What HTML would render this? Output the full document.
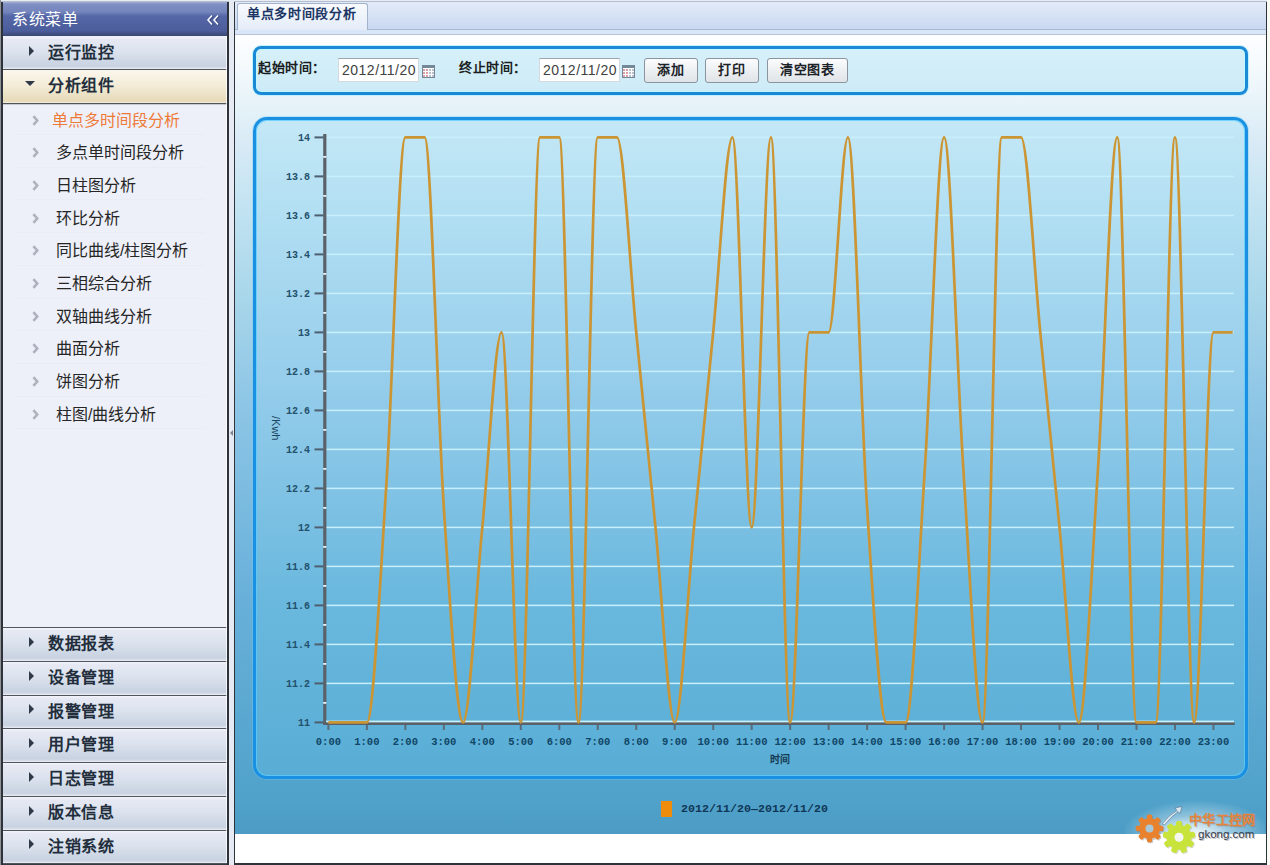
<!DOCTYPE html>
<html lang="zh-CN"><head><meta charset="utf-8"><title>单点多时间段分析</title>
<style>
html,body{margin:0;padding:0}
body{width:1270px;height:865px;overflow:hidden;position:relative;background:#e8ecf3;font-family:"Liberation Sans",sans-serif}
div,span{box-sizing:border-box}
.a{position:absolute}
#lb{position:absolute;left:0;top:0;width:1px;height:865px;background:#8f9297}
#sb{position:absolute;left:1px;top:2px;width:228px;height:863px;background:#2e323a}
#topl{position:absolute;left:0;top:1px;width:1270px;height:1px;background:#b4bdd0}
#sbin{position:absolute;left:3px;top:2px;width:224px;height:861px;background:#edf0f8}
#hdr{position:absolute;left:3px;top:2px;width:224px;height:34px;background:linear-gradient(#a4b0d2 0,#8090c4 2px,#7485bd 10px,#5567a6 14px,#4b5d9b 29px,#44538a 31px,#3c4874 34px)}
#hdr span{position:absolute;left:9px;top:8px;font-size:16px;color:#fff;line-height:20px;letter-spacing:0.7px}
.acc{position:absolute;left:3px;width:224px;background:linear-gradient(#f4f5fb 0,#e6e9f4 8%,#dce3ee 45%,#c8d2e1 90%,#d6dce8 96%,#eef0f6 100%)}
.acc span{position:absolute;left:45px;top:6px;font-size:16px;font-weight:bold;color:#222e3c;line-height:20px;letter-spacing:0.5px}
.acc .tri{position:absolute;left:26px;width:0;height:0;border-left:5px solid #2f3948;border-top:5px solid transparent;border-bottom:5px solid transparent}
.acc.open{background:linear-gradient(#fbf7ec 0,#f3ebd6 50%,#e6dab8 94%,#f2ecdc 100%)}
.acc.open .tri{left:22px;border-top:5px solid #2f3948;border-left:5px solid transparent;border-right:5px solid transparent;border-bottom:0}
.bd{position:absolute;left:3px;width:224px;height:1px;background:#50555e;box-shadow:0 0.5px 0 rgba(80,85,94,0.5)}
.chev{position:absolute;left:32px;width:6px;height:10px}
.chev:before{content:"";position:absolute;left:0;top:0;border-left:5px solid #a9adb8;border-top:5px solid transparent;border-bottom:5px solid transparent}
.chev:after{content:"";position:absolute;left:-1.5px;top:2px;border-left:3px solid #edf0f8;border-top:3px solid transparent;border-bottom:3px solid transparent}
.si{position:absolute;font-size:16px;line-height:20px;color:#262626;white-space:nowrap}
.si.sel{color:#ef7a38}
.sep{position:absolute;left:14px;width:190px;height:1px;background:#e9ecf5}
#gap{position:absolute;left:229px;top:0;width:5px;height:865px;background:#e6eaf3}
#cb{position:absolute;left:234px;top:2px;width:1033px;height:863px;background:#2e323a}
#tabbar{position:absolute;left:235px;top:2px;width:1031px;height:28px;background:linear-gradient(#e3ebf9,#c9d8f0);border-bottom:1px solid #a9b8d0}
#tabstrip{position:absolute;left:235px;top:30px;width:1031px;height:5px;background:#d9e6f7;border-bottom:1px solid #b7c3d6}
#tab{position:absolute;left:237px;top:3px;width:131px;height:27px;border:1px solid #a3b3cc;border-bottom:0;border-radius:3px 3px 0 0;background:linear-gradient(#f8fafe,#e4ecf8)}
#tab span{position:absolute;left:9px;top:2px;font-size:13px;font-weight:bold;color:#1b3564;letter-spacing:0.7px;line-height:16px}
#panel{position:absolute;left:235px;top:35px;width:1031px;height:799px;background:linear-gradient(#fdfeff 0,#f3f9fc 35px,#e6f3f9 70px,#d8eaf6 110px,#c4e4f2 165px,#a8d6ea 265px,#8ec6e6 365px,#68b0da 565px,#50a2ca 765px,#4c9cc6 798px)}
#white{position:absolute;left:235px;top:834px;width:1031px;height:29px;background:#fff}
#tb{position:absolute;left:253px;top:46px;width:995px;height:49px;border:3px solid #1a8ad6;border-radius:8px;box-shadow:0 0 0 1px rgba(180,240,255,0.8),inset 0 0 0 1px rgba(190,250,255,0.9);background:linear-gradient(#d6f0f9,#cdebf7)}
.lbl{position:absolute;top:61px;font-family:"Liberation Serif",serif;font-size:13px;font-weight:bold;color:#1a1e22;line-height:14px;letter-spacing:0.6px}
.inp{position:absolute;top:58px;width:81px;height:24px;background:#fff;border:1px solid #d3d9de;border-top:1px solid #9ea5ab}
.inp span{position:absolute;left:3px;top:3px;font-size:14px;color:#404040;line-height:16px;letter-spacing:0.5px}
.cal{position:absolute;top:64px;width:13px;height:12px;background:#7d8fa0;border-radius:1px}
.cal i{position:absolute;left:1px;top:3px;width:11px;height:8px;background:repeating-linear-gradient(90deg,#e2b0b0 0 2px,#fff 2px 3px)}
.btn{position:absolute;top:58px;height:25px;border:1px solid #8c959e;border-radius:3px;background:linear-gradient(#fbfcfd,#dfe4e8);font-family:"Liberation Serif",serif;font-size:13px;font-weight:bold;color:#1c2328;text-align:center;line-height:22px;letter-spacing:0.8px}
#cbox{position:absolute;left:253px;top:117px;width:995px;height:662px;border:3px solid #1a90e2;border-radius:14px;box-shadow:0 0 0 1px rgba(110,200,245,0.35),inset 0 0 0 1px rgba(90,205,255,0.75);background:linear-gradient(#c4e8f6 0,#b4e0f3 80px,#92cbea 280px,#6ab8de 480px,#5aaed6 643px)}
svg text{font-family:"Liberation Sans",sans-serif}
.yl{font-family:"Liberation Mono",monospace;font-size:10px;font-weight:bold;fill:#23506a}
.xl{font-family:"Liberation Mono",monospace;font-size:10.5px;font-weight:bold;fill:#104666}
.xt{font-size:10px;font-weight:bold;fill:#163a52}
.yt{font-size:11px;fill:#1a4560}
#leg{position:absolute;left:661px;top:801px;width:11px;height:16px;background:#f08c0c}
#legt{position:absolute;left:681px;top:802px;font-family:"Liberation Mono",monospace;font-size:11.67px;font-weight:bold;color:#0f3656;line-height:14px}
</style></head><body>
<div id="topl"></div><div class="a" style="left:1267px;top:0;width:3px;height:865px;background:#fbfbf6"></div><div id="lb"></div>
<div id="sb"></div>
<div id="sbin"></div>
<div id="hdr"><span>系统菜单</span>
<svg class="a" style="left:201px;top:12px" width="18" height="12" viewBox="0 0 18 12"><path d="M8 1.5 L4 6 L8 10.5 M14 1.5 L10 6 L14 10.5" stroke="#2c3868" stroke-width="1.6" fill="none" transform="translate(1.2,0.6)" opacity="0.6"/><path d="M8 1.5 L4 6 L8 10.5 M14 1.5 L10 6 L14 10.5" stroke="#fff" stroke-width="1.5" fill="none"/></svg>
</div>
<div class="acc" style="top:37px;height:32px"><div class="tri" style="top:8.5px"></div><span>运行监控</span></div><div class="bd" style="top:69px"></div>
<div class="acc open" style="top:70px;height:33px"><div class="tri" style="top:11px"></div><span>分析组件</span></div><div class="bd" style="top:103px"></div>
<svg class="a" style="left:32px;top:114.5px" width="7" height="11" viewBox="0 0 7 11"><path d="M1.4 1.2 L5.2 5.5 L1.4 9.8" stroke="#aeb2be" stroke-width="2.6" fill="none"/></svg><div class="si sel" style="top:110.5px;left:52px">单点多时间段分析</div><div class="sep" style="top:134.0px"></div>
<svg class="a" style="left:32px;top:147.2px" width="7" height="11" viewBox="0 0 7 11"><path d="M1.4 1.2 L5.2 5.5 L1.4 9.8" stroke="#aeb2be" stroke-width="2.6" fill="none"/></svg><div class="si" style="top:143.2px;left:56px">多点单时间段分析</div><div class="sep" style="top:166.7px"></div>
<svg class="a" style="left:32px;top:179.9px" width="7" height="11" viewBox="0 0 7 11"><path d="M1.4 1.2 L5.2 5.5 L1.4 9.8" stroke="#aeb2be" stroke-width="2.6" fill="none"/></svg><div class="si" style="top:175.9px;left:56px">日柱图分析</div><div class="sep" style="top:199.4px"></div>
<svg class="a" style="left:32px;top:212.6px" width="7" height="11" viewBox="0 0 7 11"><path d="M1.4 1.2 L5.2 5.5 L1.4 9.8" stroke="#aeb2be" stroke-width="2.6" fill="none"/></svg><div class="si" style="top:208.6px;left:56px">环比分析</div><div class="sep" style="top:232.1px"></div>
<svg class="a" style="left:32px;top:245.3px" width="7" height="11" viewBox="0 0 7 11"><path d="M1.4 1.2 L5.2 5.5 L1.4 9.8" stroke="#aeb2be" stroke-width="2.6" fill="none"/></svg><div class="si" style="top:241.3px;left:56px">同比曲线/柱图分析</div><div class="sep" style="top:264.8px"></div>
<svg class="a" style="left:32px;top:278.0px" width="7" height="11" viewBox="0 0 7 11"><path d="M1.4 1.2 L5.2 5.5 L1.4 9.8" stroke="#aeb2be" stroke-width="2.6" fill="none"/></svg><div class="si" style="top:274.0px;left:56px">三相综合分析</div><div class="sep" style="top:297.5px"></div>
<svg class="a" style="left:32px;top:310.7px" width="7" height="11" viewBox="0 0 7 11"><path d="M1.4 1.2 L5.2 5.5 L1.4 9.8" stroke="#aeb2be" stroke-width="2.6" fill="none"/></svg><div class="si" style="top:306.7px;left:56px">双轴曲线分析</div><div class="sep" style="top:330.2px"></div>
<svg class="a" style="left:32px;top:343.4px" width="7" height="11" viewBox="0 0 7 11"><path d="M1.4 1.2 L5.2 5.5 L1.4 9.8" stroke="#aeb2be" stroke-width="2.6" fill="none"/></svg><div class="si" style="top:339.4px;left:56px">曲面分析</div><div class="sep" style="top:362.9px"></div>
<svg class="a" style="left:32px;top:376.1px" width="7" height="11" viewBox="0 0 7 11"><path d="M1.4 1.2 L5.2 5.5 L1.4 9.8" stroke="#aeb2be" stroke-width="2.6" fill="none"/></svg><div class="si" style="top:372.1px;left:56px">饼图分析</div><div class="sep" style="top:395.6px"></div>
<svg class="a" style="left:32px;top:408.8px" width="7" height="11" viewBox="0 0 7 11"><path d="M1.4 1.2 L5.2 5.5 L1.4 9.8" stroke="#aeb2be" stroke-width="2.6" fill="none"/></svg><div class="si" style="top:404.8px;left:56px">柱图/曲线分析</div><div class="sep" style="top:428.3px"></div>
<div class="bd" style="top:627px"></div>
<div class="acc" style="top:628px;height:33px"><div class="tri" style="top:8.5px"></div><span>数据报表</span></div><div class="bd" style="top:661px"></div>
<div class="acc" style="top:662px;height:33px"><div class="tri" style="top:8.5px"></div><span>设备管理</span></div><div class="bd" style="top:695px"></div>
<div class="acc" style="top:696px;height:32px"><div class="tri" style="top:8.0px"></div><span>报警管理</span></div><div class="bd" style="top:728px"></div>
<div class="acc" style="top:729px;height:33px"><div class="tri" style="top:8.5px"></div><span>用户管理</span></div><div class="bd" style="top:762px"></div>
<div class="acc" style="top:763px;height:33px"><div class="tri" style="top:8.5px"></div><span>日志管理</span></div><div class="bd" style="top:796px"></div>
<div class="acc" style="top:797px;height:33px"><div class="tri" style="top:8.5px"></div><span>版本信息</span></div><div class="bd" style="top:830px"></div>
<div class="acc" style="top:831px;height:32px"><div class="tri" style="top:8.0px"></div><span>注销系统</span></div><div class="bd" style="top:863px"></div>
<div id="gap"></div>
<div class="a" style="left:230px;top:430px;width:0;height:0;border-right:3px solid #7c848e;border-top:3px solid transparent;border-bottom:3px solid transparent"></div><div class="a" style="left:226px;top:36px;width:1px;height:827px;background:rgba(255,255,255,0.75)"></div>
<div id="cb"></div>
<div id="tabbar"></div>
<div id="tabstrip"></div>
<div id="tab"><span>单点多时间段分析</span></div>
<div id="panel"></div>
<div id="white"></div>
<div id="tb"></div>
<div class="lbl" style="left:258px">起始时间：</div>
<div class="inp" style="left:338px"><span>2012/11/20</span></div>
<div class="a" style="left:422px;top:64px"><svg width="13" height="13" viewBox="0 0 13 13"><rect x="0" y="0" width="13" height="13" fill="#74889a"/><rect x="1" y="3" width="11" height="9" fill="#fff"/><rect x="1" y="4" width="2" height="2" fill="#e0a0a8"/><rect x="1" y="7" width="2" height="2" fill="#e0a0a8"/><rect x="1" y="10" width="2" height="2" fill="#e0a0a8"/><rect x="4" y="4" width="2" height="2" fill="#e0a0a8"/><rect x="4" y="7" width="2" height="2" fill="#e0a0a8"/><rect x="4" y="10" width="2" height="2" fill="#e0a0a8"/><rect x="7" y="4" width="2" height="2" fill="#b8c0cc"/><rect x="7" y="7" width="2" height="2" fill="#b8c0cc"/><rect x="7" y="10" width="2" height="2" fill="#b8c0cc"/><rect x="10" y="4" width="2" height="2" fill="#b8c0cc"/><rect x="10" y="7" width="2" height="2" fill="#b8c0cc"/><rect x="10" y="10" width="2" height="2" fill="#b8c0cc"/></svg></div>
<div class="lbl" style="left:459px">终止时间：</div>
<div class="inp" style="left:539px"><span>2012/11/20</span></div>
<div class="a" style="left:622px;top:64px"><svg width="13" height="13" viewBox="0 0 13 13"><rect x="0" y="0" width="13" height="13" fill="#74889a"/><rect x="1" y="3" width="11" height="9" fill="#fff"/><rect x="1" y="4" width="2" height="2" fill="#e0a0a8"/><rect x="1" y="7" width="2" height="2" fill="#e0a0a8"/><rect x="1" y="10" width="2" height="2" fill="#e0a0a8"/><rect x="4" y="4" width="2" height="2" fill="#e0a0a8"/><rect x="4" y="7" width="2" height="2" fill="#e0a0a8"/><rect x="4" y="10" width="2" height="2" fill="#e0a0a8"/><rect x="7" y="4" width="2" height="2" fill="#b8c0cc"/><rect x="7" y="7" width="2" height="2" fill="#b8c0cc"/><rect x="7" y="10" width="2" height="2" fill="#b8c0cc"/><rect x="10" y="4" width="2" height="2" fill="#b8c0cc"/><rect x="10" y="7" width="2" height="2" fill="#b8c0cc"/><rect x="10" y="10" width="2" height="2" fill="#b8c0cc"/></svg></div>
<div class="btn" style="left:644px;width:54px">添加</div>
<div class="btn" style="left:705px;width:54px">打印</div>
<div class="btn" style="left:767px;width:81px">清空图表</div>
<div id="cbox"></div>
<svg class="a" style="left:0;top:0" width="1270" height="865">
<rect x="326" y="721.65" width="908" height="1.5" fill="#c8f0fc"/>
<rect x="326" y="682.65" width="908" height="1.5" fill="#c8f0fc"/>
<rect x="326" y="643.65" width="908" height="1.5" fill="#c8f0fc"/>
<rect x="326" y="604.65" width="908" height="1.5" fill="#c8f0fc"/>
<rect x="326" y="565.65" width="908" height="1.5" fill="#c8f0fc"/>
<rect x="326" y="526.65" width="908" height="1.5" fill="#c8f0fc"/>
<rect x="326" y="487.65" width="908" height="1.5" fill="#c8f0fc"/>
<rect x="326" y="448.65" width="908" height="1.5" fill="#c8f0fc"/>
<rect x="326" y="409.65" width="908" height="1.5" fill="#c8f0fc"/>
<rect x="326" y="370.65" width="908" height="1.5" fill="#c8f0fc"/>
<rect x="326" y="331.65" width="908" height="1.5" fill="#c8f0fc"/>
<rect x="326" y="292.65" width="908" height="1.5" fill="#c8f0fc"/>
<rect x="326" y="253.65" width="908" height="1.5" fill="#c8f0fc"/>
<rect x="326" y="214.65" width="908" height="1.5" fill="#c8f0fc"/>
<rect x="326" y="175.65" width="908" height="1.5" fill="#c8f0fc"/>
<rect x="326" y="136.65" width="908" height="1.5" fill="#c8f0fc"/>
<rect x="323.2" y="134" width="3.2" height="591" fill="#5a6169"/>
<rect x="323.2" y="722.3" width="911.5" height="2.7" fill="#5a6169"/>
<rect x="326" y="720.6" width="908" height="1.5" fill="#c8f0fc"/>
<rect x="323.2" y="702.00" width="3.2" height="1.8" fill="#e4f2f8"/>
<rect x="323.2" y="663.00" width="3.2" height="1.8" fill="#e4f2f8"/>
<rect x="323.2" y="624.00" width="3.2" height="1.8" fill="#e4f2f8"/>
<rect x="323.2" y="585.00" width="3.2" height="1.8" fill="#e4f2f8"/>
<rect x="323.2" y="546.00" width="3.2" height="1.8" fill="#e4f2f8"/>
<rect x="323.2" y="507.00" width="3.2" height="1.8" fill="#e4f2f8"/>
<rect x="323.2" y="468.00" width="3.2" height="1.8" fill="#e4f2f8"/>
<rect x="323.2" y="429.00" width="3.2" height="1.8" fill="#e4f2f8"/>
<rect x="323.2" y="390.00" width="3.2" height="1.8" fill="#e4f2f8"/>
<rect x="323.2" y="351.00" width="3.2" height="1.8" fill="#e4f2f8"/>
<rect x="323.2" y="312.00" width="3.2" height="1.8" fill="#e4f2f8"/>
<rect x="323.2" y="273.00" width="3.2" height="1.8" fill="#e4f2f8"/>
<rect x="323.2" y="234.00" width="3.2" height="1.8" fill="#e4f2f8"/>
<rect x="323.2" y="195.00" width="3.2" height="1.8" fill="#e4f2f8"/>
<rect x="323.2" y="156.00" width="3.2" height="1.8" fill="#e4f2f8"/>
<rect x="314.5" y="721.40" width="9" height="2" fill="#4e6070"/>
<rect x="314.5" y="682.40" width="9" height="2" fill="#4e6070"/>
<rect x="314.5" y="643.40" width="9" height="2" fill="#4e6070"/>
<rect x="314.5" y="604.40" width="9" height="2" fill="#4e6070"/>
<rect x="314.5" y="565.40" width="9" height="2" fill="#4e6070"/>
<rect x="314.5" y="526.40" width="9" height="2" fill="#4e6070"/>
<rect x="314.5" y="487.40" width="9" height="2" fill="#4e6070"/>
<rect x="314.5" y="448.40" width="9" height="2" fill="#4e6070"/>
<rect x="314.5" y="409.40" width="9" height="2" fill="#4e6070"/>
<rect x="314.5" y="370.40" width="9" height="2" fill="#4e6070"/>
<rect x="314.5" y="331.40" width="9" height="2" fill="#4e6070"/>
<rect x="314.5" y="292.40" width="9" height="2" fill="#4e6070"/>
<rect x="314.5" y="253.40" width="9" height="2" fill="#4e6070"/>
<rect x="314.5" y="214.40" width="9" height="2" fill="#4e6070"/>
<rect x="314.5" y="175.40" width="9" height="2" fill="#4e6070"/>
<rect x="314.5" y="136.40" width="9" height="2" fill="#4e6070"/>
<text x="310" y="725.90" text-anchor="end" class="yl">11</text>
<text x="310" y="686.90" text-anchor="end" class="yl">11.2</text>
<text x="310" y="647.90" text-anchor="end" class="yl">11.4</text>
<text x="310" y="608.90" text-anchor="end" class="yl">11.6</text>
<text x="310" y="569.90" text-anchor="end" class="yl">11.8</text>
<text x="310" y="530.90" text-anchor="end" class="yl">12</text>
<text x="310" y="491.90" text-anchor="end" class="yl">12.2</text>
<text x="310" y="452.90" text-anchor="end" class="yl">12.4</text>
<text x="310" y="413.90" text-anchor="end" class="yl">12.6</text>
<text x="310" y="374.90" text-anchor="end" class="yl">12.8</text>
<text x="310" y="335.90" text-anchor="end" class="yl">13</text>
<text x="310" y="296.90" text-anchor="end" class="yl">13.2</text>
<text x="310" y="257.90" text-anchor="end" class="yl">13.4</text>
<text x="310" y="218.90" text-anchor="end" class="yl">13.6</text>
<text x="310" y="179.90" text-anchor="end" class="yl">13.8</text>
<text x="310" y="140.90" text-anchor="end" class="yl">14</text>
<rect x="327.40" y="725" width="2" height="5" fill="#5a6c7a"/>
<text x="328.40" y="745" text-anchor="middle" class="xl">0:00</text>
<rect x="365.88" y="725" width="2" height="5" fill="#5a6c7a"/>
<text x="366.88" y="745" text-anchor="middle" class="xl">1:00</text>
<rect x="404.36" y="725" width="2" height="5" fill="#5a6c7a"/>
<text x="405.36" y="745" text-anchor="middle" class="xl">2:00</text>
<rect x="442.84" y="725" width="2" height="5" fill="#5a6c7a"/>
<text x="443.84" y="745" text-anchor="middle" class="xl">3:00</text>
<rect x="481.32" y="725" width="2" height="5" fill="#5a6c7a"/>
<text x="482.32" y="745" text-anchor="middle" class="xl">4:00</text>
<rect x="519.80" y="725" width="2" height="5" fill="#5a6c7a"/>
<text x="520.80" y="745" text-anchor="middle" class="xl">5:00</text>
<rect x="558.28" y="725" width="2" height="5" fill="#5a6c7a"/>
<text x="559.28" y="745" text-anchor="middle" class="xl">6:00</text>
<rect x="596.76" y="725" width="2" height="5" fill="#5a6c7a"/>
<text x="597.76" y="745" text-anchor="middle" class="xl">7:00</text>
<rect x="635.24" y="725" width="2" height="5" fill="#5a6c7a"/>
<text x="636.24" y="745" text-anchor="middle" class="xl">8:00</text>
<rect x="673.72" y="725" width="2" height="5" fill="#5a6c7a"/>
<text x="674.72" y="745" text-anchor="middle" class="xl">9:00</text>
<rect x="712.20" y="725" width="2" height="5" fill="#5a6c7a"/>
<text x="713.20" y="745" text-anchor="middle" class="xl">10:00</text>
<rect x="750.68" y="725" width="2" height="5" fill="#5a6c7a"/>
<text x="751.68" y="745" text-anchor="middle" class="xl">11:00</text>
<rect x="789.16" y="725" width="2" height="5" fill="#5a6c7a"/>
<text x="790.16" y="745" text-anchor="middle" class="xl">12:00</text>
<rect x="827.64" y="725" width="2" height="5" fill="#5a6c7a"/>
<text x="828.64" y="745" text-anchor="middle" class="xl">13:00</text>
<rect x="866.12" y="725" width="2" height="5" fill="#5a6c7a"/>
<text x="867.12" y="745" text-anchor="middle" class="xl">14:00</text>
<rect x="904.60" y="725" width="2" height="5" fill="#5a6c7a"/>
<text x="905.60" y="745" text-anchor="middle" class="xl">15:00</text>
<rect x="943.08" y="725" width="2" height="5" fill="#5a6c7a"/>
<text x="944.08" y="745" text-anchor="middle" class="xl">16:00</text>
<rect x="981.56" y="725" width="2" height="5" fill="#5a6c7a"/>
<text x="982.56" y="745" text-anchor="middle" class="xl">17:00</text>
<rect x="1020.04" y="725" width="2" height="5" fill="#5a6c7a"/>
<text x="1021.04" y="745" text-anchor="middle" class="xl">18:00</text>
<rect x="1058.52" y="725" width="2" height="5" fill="#5a6c7a"/>
<text x="1059.52" y="745" text-anchor="middle" class="xl">19:00</text>
<rect x="1097.00" y="725" width="2" height="5" fill="#5a6c7a"/>
<text x="1098.00" y="745" text-anchor="middle" class="xl">20:00</text>
<rect x="1135.48" y="725" width="2" height="5" fill="#5a6c7a"/>
<text x="1136.48" y="745" text-anchor="middle" class="xl">21:00</text>
<rect x="1173.96" y="725" width="2" height="5" fill="#5a6c7a"/>
<text x="1174.96" y="745" text-anchor="middle" class="xl">22:00</text>
<rect x="1212.44" y="725" width="2" height="5" fill="#5a6c7a"/>
<text x="1213.44" y="745" text-anchor="middle" class="xl">23:00</text>
<text x="780" y="763" text-anchor="middle" class="xt">时间</text>
<text transform="translate(272,416) rotate(90)" class="yt">/Kwh</text>
<clipPath id="pc"><rect x="326" y="134" width="910" height="590"/></clipPath>
<path d="M328.40,722.40 C334.81,722.40 341.23,722.40 347.64,722.40 C354.05,722.40 360.47,722.40 366.88,722.40 C373.29,722.40 379.71,585.90 386.12,488.40 C392.53,390.90 398.95,137.40 405.36,137.40 C411.77,137.40 418.19,137.40 424.60,137.40 C431.01,137.40 437.43,410.40 443.84,507.90 C450.25,605.40 456.67,722.40 463.08,722.40 C469.49,722.40 475.91,592.40 482.32,527.40 C488.73,462.40 495.15,332.40 501.56,332.40 C507.97,332.40 514.39,722.40 520.80,722.40 C527.21,722.40 533.63,137.40 540.04,137.40 C546.45,137.40 552.87,137.40 559.28,137.40 C565.69,137.40 572.11,722.40 578.52,722.40 C584.93,722.40 591.35,137.40 597.76,137.40 C604.17,137.40 610.59,137.40 617.00,137.40 C623.41,137.40 629.83,267.40 636.24,332.40 C642.65,397.40 649.07,462.40 655.48,527.40 C661.89,592.40 668.31,722.40 674.72,722.40 C681.13,722.40 687.55,592.40 693.96,527.40 C700.37,462.40 706.79,397.40 713.20,332.40 C719.61,267.40 726.03,137.40 732.44,137.40 C738.85,137.40 745.27,527.40 751.68,527.40 C758.09,527.40 764.51,137.40 770.92,137.40 C777.33,137.40 783.75,722.40 790.16,722.40 C796.57,722.40 802.99,332.40 809.40,332.40 C815.81,332.40 822.23,332.40 828.64,332.40 C835.05,332.40 841.47,137.40 847.88,137.40 C854.29,137.40 860.71,410.40 867.12,507.90 C873.53,605.40 879.95,722.40 886.36,722.40 C892.77,722.40 899.19,722.40 905.60,722.40 C912.01,722.40 918.43,566.40 924.84,468.90 C931.25,371.40 937.67,137.40 944.08,137.40 C950.49,137.40 956.91,371.40 963.32,468.90 C969.73,566.40 976.15,722.40 982.56,722.40 C988.97,722.40 995.39,137.40 1001.80,137.40 C1008.21,137.40 1014.63,137.40 1021.04,137.40 C1027.45,137.40 1033.87,267.40 1040.28,332.40 C1046.69,397.40 1053.11,462.40 1059.52,527.40 C1065.93,592.40 1072.35,722.40 1078.76,722.40 C1085.17,722.40 1091.59,566.40 1098.00,468.90 C1104.41,371.40 1110.83,137.40 1117.24,137.40 C1123.65,137.40 1130.07,722.40 1136.48,722.40 C1142.89,722.40 1149.31,722.40 1155.72,722.40 C1162.13,722.40 1168.55,137.40 1174.96,137.40 C1181.37,137.40 1187.79,722.40 1194.20,722.40 C1200.61,722.40 1207.03,332.40 1213.44,332.40 C1219.85,332.40 1226.27,332.40 1232.68,332.40" fill="none" stroke="#cc9534" stroke-width="2.7" stroke-linejoin="round" clip-path="url(#pc)"/>
</svg>
<div id="leg"></div>
<div id="legt">2012/11/20—2012/11/20</div>
<svg class="a" style="left:1125px;top:800px" width="140" height="64" viewBox="0 0 140 64">
<defs><radialGradient id="glow"><stop offset="0" stop-color="#fff" stop-opacity="0.8"/><stop offset="1" stop-color="#fff" stop-opacity="0"/></radialGradient></defs>
<ellipse cx="72" cy="34" rx="75" ry="34" fill="url(#glow)"/><ellipse cx="60" cy="40" rx="45" ry="24" fill="url(#glow)"/>
<g transform="translate(25.5,29.4)" fill="#7a6a60" opacity="0.35"><circle r="11"/><rect x="-2.6" y="-13.8" width="5.2" height="6" rx="1.5" transform="rotate(0)"/><rect x="-2.6" y="-13.8" width="5.2" height="6" rx="1.5" transform="rotate(45)"/><rect x="-2.6" y="-13.8" width="5.2" height="6" rx="1.5" transform="rotate(90)"/><rect x="-2.6" y="-13.8" width="5.2" height="6" rx="1.5" transform="rotate(135)"/><rect x="-2.6" y="-13.8" width="5.2" height="6" rx="1.5" transform="rotate(180)"/><rect x="-2.6" y="-13.8" width="5.2" height="6" rx="1.5" transform="rotate(225)"/><rect x="-2.6" y="-13.8" width="5.2" height="6" rx="1.5" transform="rotate(270)"/><rect x="-2.6" y="-13.8" width="5.2" height="6" rx="1.5" transform="rotate(315)"/></g><g transform="translate(24.5,28.4)" fill="#e8822e"><circle r="10.5"/><rect x="-2.6" y="-13.8" width="5.2" height="6" rx="1.5" transform="rotate(0)"/><rect x="-2.6" y="-13.8" width="5.2" height="6" rx="1.5" transform="rotate(45)"/><rect x="-2.6" y="-13.8" width="5.2" height="6" rx="1.5" transform="rotate(90)"/><rect x="-2.6" y="-13.8" width="5.2" height="6" rx="1.5" transform="rotate(135)"/><rect x="-2.6" y="-13.8" width="5.2" height="6" rx="1.5" transform="rotate(180)"/><rect x="-2.6" y="-13.8" width="5.2" height="6" rx="1.5" transform="rotate(225)"/><rect x="-2.6" y="-13.8" width="5.2" height="6" rx="1.5" transform="rotate(270)"/><rect x="-2.6" y="-13.8" width="5.2" height="6" rx="1.5" transform="rotate(315)"/><circle r="4" fill="#a8c8d8"/></g>
<g transform="translate(55,38.2)" fill="#7a8a60" opacity="0.3"><circle r="12.5"/><rect x="-3" y="-16.2" width="6" height="6.5" rx="1.8" transform="rotate(0)"/><rect x="-3" y="-16.2" width="6" height="6.5" rx="1.8" transform="rotate(40)"/><rect x="-3" y="-16.2" width="6" height="6.5" rx="1.8" transform="rotate(80)"/><rect x="-3" y="-16.2" width="6" height="6.5" rx="1.8" transform="rotate(120)"/><rect x="-3" y="-16.2" width="6" height="6.5" rx="1.8" transform="rotate(160)"/><rect x="-3" y="-16.2" width="6" height="6.5" rx="1.8" transform="rotate(200)"/><rect x="-3" y="-16.2" width="6" height="6.5" rx="1.8" transform="rotate(240)"/><rect x="-3" y="-16.2" width="6" height="6.5" rx="1.8" transform="rotate(280)"/><rect x="-3" y="-16.2" width="6" height="6.5" rx="1.8" transform="rotate(320)"/></g><g transform="translate(54,37.2)" fill="#c8e43c"><circle r="12.5"/><rect x="-3" y="-16.2" width="6" height="6.5" rx="1.8" transform="rotate(0)"/><rect x="-3" y="-16.2" width="6" height="6.5" rx="1.8" transform="rotate(40)"/><rect x="-3" y="-16.2" width="6" height="6.5" rx="1.8" transform="rotate(80)"/><rect x="-3" y="-16.2" width="6" height="6.5" rx="1.8" transform="rotate(120)"/><rect x="-3" y="-16.2" width="6" height="6.5" rx="1.8" transform="rotate(160)"/><rect x="-3" y="-16.2" width="6" height="6.5" rx="1.8" transform="rotate(200)"/><rect x="-3" y="-16.2" width="6" height="6.5" rx="1.8" transform="rotate(240)"/><rect x="-3" y="-16.2" width="6" height="6.5" rx="1.8" transform="rotate(280)"/><rect x="-3" y="-16.2" width="6" height="6.5" rx="1.8" transform="rotate(320)"/><circle r="4.5" fill="#f2f8f0"/></g>
<path d="M37 24 Q44 15 52 10.5 L50 8 L57 6.5 L55 13.5 L53 11.5 Q46 17 39.5 25 Z" fill="#dbe8f2" stroke="#4e6c84" stroke-width="0.8" stroke-opacity="0.7"/>
<text x="65" y="25" font-size="13" font-weight="bold" fill="#8a6a50" opacity="0.45" letter-spacing="0.3">中华工控网</text><text x="64" y="24" font-size="13" font-weight="bold" fill="#e8843a" letter-spacing="0.3">中华工控网</text>
<text x="73" y="38" font-size="11.5" fill="#7a8490" opacity="0.5" transform="translate(1,1)">gkong.com</text><text x="73" y="38" font-size="11.5" fill="#36404c">gkong.com</text>
</svg>
</body></html>
